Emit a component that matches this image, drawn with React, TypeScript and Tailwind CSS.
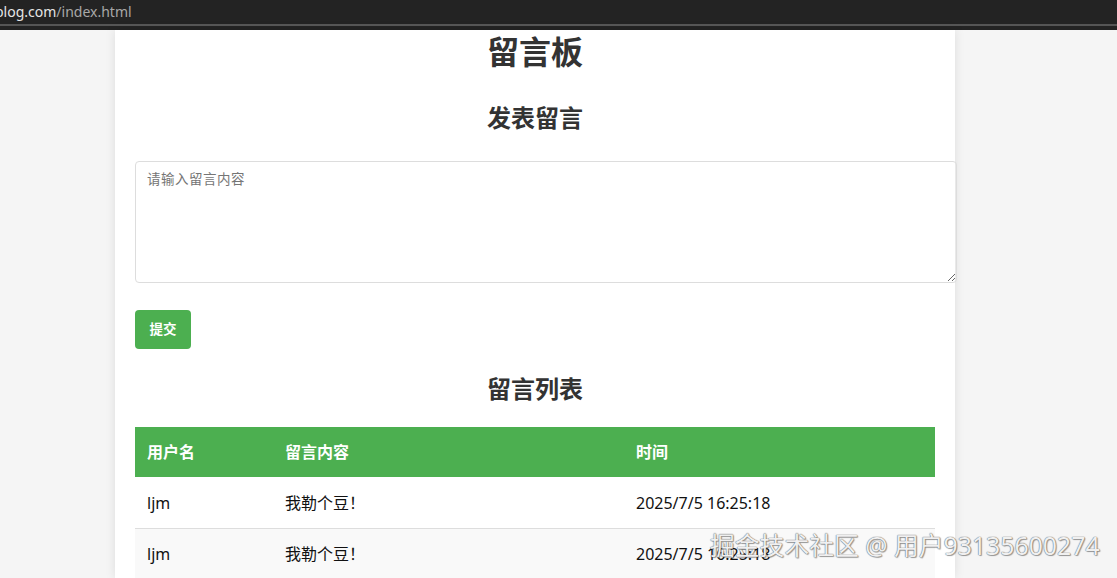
import React from "react";

export default function App() {
  const rows = [
    { user: "ljm", content: "我勒个豆！", time: "2025/7/5 16:25:18" },
    { user: "ljm", content: "我勒个豆！", time: "2025/7/5 16:25:18" },
  ];
  return (
    <div
      className="relative h-[578px] w-[1117px] overflow-hidden bg-[#f5f5f5]"
      style={{ fontFamily: '"Noto Sans", "Noto Sans CJK SC", sans-serif' }}
    >
      {/* browser bar */}
      <div className="h-[30px] bg-[#232323] flex flex-col">
        <div className="h-[24px] flex items-center overflow-hidden">
          <span className="ml-[-5px] text-[14px] leading-none text-[#e6e6e6] whitespace-nowrap">
            blog.com<span className="text-[#a8a8a8]">/index.html</span>
          </span>
        </div>
        <div className="h-[2px] bg-[#555555]" />
      </div>

      {/* page */}
      <div className="ml-[115px] w-[840px] bg-white shadow-[0_0_10px_rgba(0,0,0,0.1)] px-[20px] h-[548px]">
        <h1 className="pt-[3px] text-center text-[32px] leading-[38px] font-bold text-[#333]">
          留言板
        </h1>
        <h2 className="mt-[32px] text-center text-[24px] leading-[29px] font-bold text-[#333]">
          发表留言
        </h2>
        <textarea
          placeholder="请输入留言内容"
          className="mt-[29px] block h-[122px] w-[822px] rounded-[4px] border border-[#dddddd] px-[11px] pt-[7px] pb-[9px] text-[13.5px] tracking-[0.5px] text-[#333] placeholder:text-[#757575] outline-none"
        />
        <button className="mt-[27px] block h-[39px] w-[56px] rounded-[4px] bg-[#4caf50] text-[13.5px] font-semibold text-white">
          提交
        </button>
        <h2 className="mt-[25px] text-center text-[24px] leading-[29px] font-bold text-[#333]">
          留言列表
        </h2>
        <table className="mt-[24px] w-[800px] border-collapse text-left text-[16px]">
          <thead>
            <tr className="bg-[#4caf50] text-white h-[50px]">
              <th className="w-[138px] px-[12px] font-bold">用户名</th>
              <th className="w-[351px] px-[12px] font-bold">留言内容</th>
              <th className="px-[12px] font-bold">时间</th>
            </tr>
          </thead>
          <tbody>
            {rows.map((r, i) => (
              <tr
                key={i}
                className={`h-[51px] border-b border-[#dddddd] text-[#111] ${i % 2 === 1 ? "bg-[#f9f9f9]" : "bg-white"}`}
              >
                <td className="px-[12px] pt-[1px]">{r.user}</td>
                <td className="px-[12px] pt-[1px]">{r.content}</td>
                <td className="px-[12px] pt-[1px]">{r.time}</td>
              </tr>
            ))}
          </tbody>
        </table>
      </div>

      {/* watermark */}
      <div
        className="absolute left-[710px] top-[529px] whitespace-nowrap text-[24.8px] leading-[32px] text-white/90"
        style={{
          textShadow:
            "0 0 1px #666, 0 0 1px #666, 1px 1px 1px rgba(0,0,0,0.35)",
        }}
      >
        掘金技术社区 @ 用户93135600274
      </div>
    </div>
  );
}
